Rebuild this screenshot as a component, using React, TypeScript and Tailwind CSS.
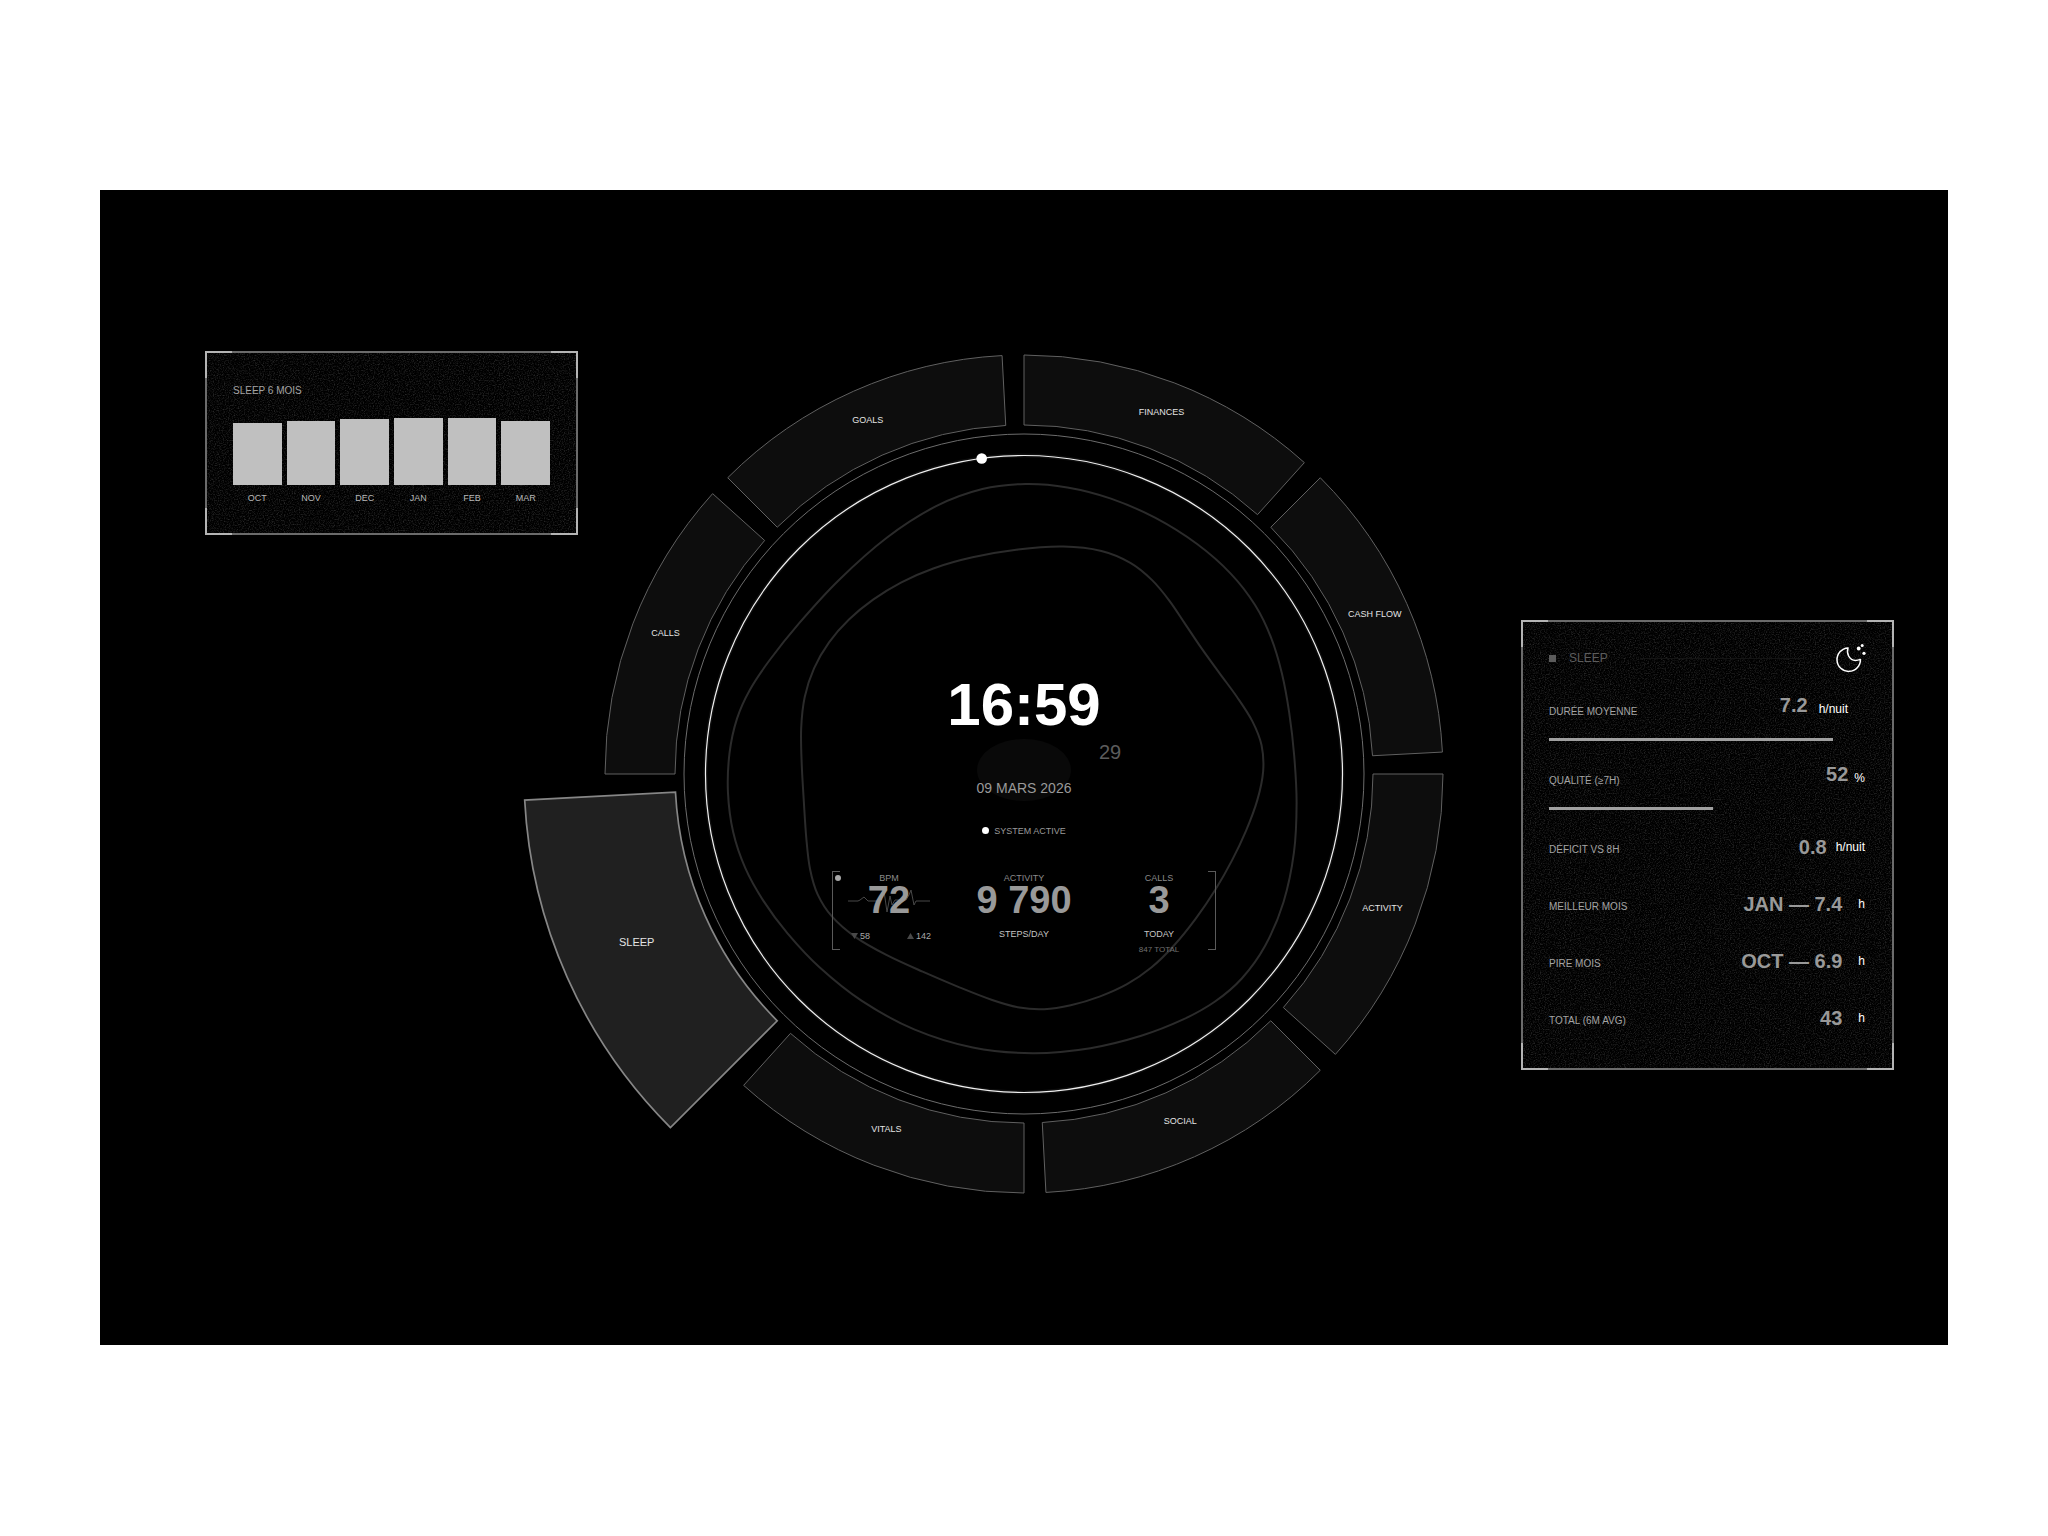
import type { ReactNode } from "react";

type Point = [number, number];

const CENTER = 419;
const OUTER = 419;
const INNER = 349;
const ACTIVE_OUTER = 500;

const segments = [
  { label: "FINANCES", active: false },
  { label: "CASH FLOW", active: false },
  { label: "ACTIVITY", active: false },
  { label: "SOCIAL", active: false },
  { label: "VITALS", active: false },
  { label: "SLEEP", active: true },
  { label: "CALLS", active: false },
  { label: "GOALS", active: false },
];

const months = [
  { name: "OCT", hours: 6.9, height: 62 },
  { name: "NOV", hours: 7.1, height: 64 },
  { name: "DEC", hours: 7.3, height: 66 },
  { name: "JAN", hours: 7.4, height: 67 },
  { name: "FEB", hours: 7.4, height: 67 },
  { name: "MAR", hours: 7.1, height: 64 },
];

const outerBlob: Point[] = [
  [1025, 484], [1067, 487], [1110, 497], [1153, 515], [1200, 544], [1233, 575], [1254, 603],
  [1271, 637], [1282, 673], [1289, 710], [1293, 757], [1296, 800], [1295, 850], [1286, 900],
  [1264, 950], [1240, 978], [1213, 1000], [1187, 1015], [1140, 1036], [1093, 1047], [1030, 1052],
  [975, 1048], [914, 1031], [860, 999], [817, 964], [790, 933], [763, 898], [746, 868], [733, 833],
  [727, 795], [730, 747], [738, 715], [750, 690], [770, 660], [797, 627], [837, 580], [887, 533],
  [940, 502], [982, 489],
];

const innerBlob: Point[] = [
  [1070, 544], [1100, 549], [1130, 562], [1153, 580], [1170, 600], [1183, 621], [1200, 647],
  [1220, 674], [1237, 695], [1253, 722], [1262, 745], [1264, 767], [1258, 800], [1245, 831],
  [1230, 861], [1217, 886], [1197, 917], [1173, 946], [1147, 969], [1133, 980], [1100, 996],
  [1067, 1005], [1043, 1008], [1020, 1006], [995, 1001], [960, 986], [922, 969], [887, 954],
  [853, 936], [832, 917], [817, 891], [810, 867], [807, 843], [805, 800], [802, 760], [801, 727],
  [804, 697], [813, 668], [830, 640], [850, 618], [870, 601], [905, 580], [933, 567], [967, 558],
  [1017, 549],
];

function polar(radius: number, degrees: number): Point {
  const a = (degrees * Math.PI) / 180;
  return [CENTER + radius * Math.sin(a), CENTER - radius * Math.cos(a)];
}

function segmentPath(start: number, active: boolean) {
  const outer = active ? ACTIVE_OUTER : OUTER;
  const end = start + 42;
  const a = polar(outer, start);
  const b = polar(outer, end);
  const c = polar(INNER, end);
  const d = polar(INNER, start);
  return `M${a} A${outer} ${outer} 0 0 1 ${b} L${c} A${INNER} ${INNER} 0 0 0 ${d} Z`;
}

// One relaxation step on a closed contour; a negative weight restores lost volume.
function relax(p: Point[], weight: number): Point[] {
  const n = p.length;
  return p.map(([x, y], i): Point => {
    const [ax, ay] = p[(i + n - 1) % n];
    const [bx, by] = p[(i + 1) % n];
    return [x + weight * ((ax + bx) / 2 - x), y + weight * ((ay + by) / 2 - y)];
  });
}

function smoothPath(source: Point[]) {
  let p = source.map(([x, y]): Point => [x - 605, y - 354]);
  for (let i = 0; i < 6; i++) p = relax(relax(p, 0.5), -0.5);
  const n = p.length;
  let d = `M${p[0]}`;
  for (let i = 0; i < n; i++) {
    const p0 = p[(i + n - 1) % n];
    const p1 = p[i];
    const p2 = p[(i + 1) % n];
    const p3 = p[(i + 2) % n];
    d += ` C${p1[0] + (p2[0] - p0[0]) / 6},${p1[1] + (p2[1] - p0[1]) / 6}`;
    d += ` ${p2[0] - (p3[0] - p1[0]) / 6},${p2[1] - (p3[1] - p1[1]) / 6} ${p2}`;
  }
  return d + "Z";
}

function Panel({ label, children }: { label: string; children: ReactNode }) {
  return (
    <section aria-label={label} className="relative w-full max-w-[373px] border-2 border-[#6b6b6b] bg-black px-[26px] py-[26px]">
      <svg className="absolute inset-0 h-full w-full" aria-hidden="true">
        <filter id={`grain-${label.length}`} colorInterpolationFilters="sRGB">
          <feTurbulence type="fractalNoise" baseFrequency="0.8" numOctaves="2" />
          <feColorMatrix values="0.4 0 0 0 -0.18  0.4 0 0 0 -0.18  0.4 0 0 0 -0.18  0 0 0 0 1" />
        </filter>
        <rect width="100%" height="100%" filter={`url(#grain-${label.length})`} />
      </svg>
      <span className="absolute -left-0.5 -top-0.5 size-[27px] border-l-2 border-t-2 border-[#b4b4b4]" />
      <span className="absolute -right-0.5 -top-0.5 size-[27px] border-r-2 border-t-2 border-[#b4b4b4]" />
      <span className="absolute -bottom-0.5 -left-0.5 size-[27px] border-b-2 border-l-2 border-[#b4b4b4]" />
      <span className="absolute -bottom-0.5 -right-0.5 size-[27px] border-b-2 border-r-2 border-[#b4b4b4]" />
      <div className="relative">{children}</div>
    </section>
  );
}

function SleepChart() {
  return (
    <Panel label="Sleep chart">
      <h2 className="text-[10px] leading-6 text-[#a4a4a4]">SLEEP 6 MOIS</h2>
      <ul className="mt-[15px] flex items-end gap-[5px]">
        {months.map((m) => (
          <li key={m.name} className="flex-1 text-center" title={`${m.hours} h`}>
            <div className="bg-[#c0c0c0]" style={{ height: m.height }} />
            <p className="mb-0.5 mt-1.5 text-[9px] leading-[14px] text-[#b8b8b8]">{m.name}</p>
          </li>
        ))}
      </ul>
    </Panel>
  );
}

function MoonIcon() {
  return (
    <svg viewBox="0 0 30 30" className="size-[30px]" fill="none" stroke="#fff" strokeWidth="1.5" strokeLinejoin="round" aria-hidden="true">
      <path d="M12 5A11.7 11.7 0 1 0 24.4 16.4C19 18.6 14.8 17 12.6 13C11.2 10.4 11.2 7.6 12 5Z" />
      <g fill="#fff" stroke="none">
        <circle cx="22.7" cy="5.5" r="1.9" />
        <circle cx="26.2" cy="2.6" r="1.5" />
        <circle cx="28" cy="10.3" r="1.6" />
      </g>
    </svg>
  );
}

function Value({ value, unit, gap, low = false }: { value: string; unit: string; gap: string; low?: boolean }) {
  return (
    <span className={`flex items-center ${gap}`}>
      <span className="text-[20px] font-bold leading-6 text-[#999]">{value}</span>
      <span className={`text-xs text-white ${low ? "pt-2" : ""}`}>{unit}</span>
    </span>
  );
}

function Meter({ label, value, unit, percent, gap }: { label: string; value: string; unit: string; percent: number; gap: string }) {
  return (
    <li className="mb-[27px]">
      <div className="flex h-6 items-center justify-between">
        <span className="pt-0.5 text-[10px] text-[#a4a4a4]">{label}</span>
        <span className="pb-3">
          <Value value={value} unit={unit} gap={gap} low />
        </span>
      </div>
      <div role="meter" aria-label={label} aria-valuenow={percent} className="mt-[15px] h-[3px]">
        <div className="h-full bg-[#a0a0a0]" style={{ width: `${percent}%` }} />
      </div>
    </li>
  );
}

function Row({ label, value, unit, gap }: { label: string; value: string; unit: string; gap: string }) {
  return (
    <li className="flex h-[57px] items-start justify-between last:h-[34px]">
      <span className="text-[10px] leading-[26px] text-[#a4a4a4]">{label}</span>
      <span className="-mt-0.5">
        <Value value={value} unit={unit} gap={gap} />
      </span>
    </li>
  );
}

function SleepDetails() {
  return (
    <Panel label="Sleep details">
      <header className="-mt-1 flex h-[29px] items-center">
        <span className="size-[7px] bg-[#5c5c5c]" />
        <h2 className="ml-[13px] text-xs text-[#5c5c5c]">SLEEP</h2>
        <span className="mx-8 h-px flex-1 bg-[#141414]" />
        <MoonIcon />
      </header>
      <ul className="mr-px mt-[26px]">
        <Meter label="DURÉE MOYENNE" value="7.2" unit="h/nuit" percent={90} gap="gap-[11px] pr-[17px]" />
        <Meter label="QUALITÉ (≥7H)" value="52" unit="%" percent={52} gap="gap-1.5" />
        <Row label="DÉFICIT VS 8H" value="0.8" unit="h/nuit" gap="gap-[9px]" />
        <Row label="MEILLEUR MOIS" value="JAN — 7.4" unit="h" gap="gap-4" />
        <Row label="PIRE MOIS" value="OCT — 6.9" unit="h" gap="gap-4" />
        <Row label="TOTAL (6M AVG)" value="43" unit="h" gap="gap-4" />
      </ul>
    </Panel>
  );
}

function Stats() {
  return (
    <div className="relative mt-8 grid w-[405px] grid-cols-3 text-center text-[9px] leading-[10px]">
      <span className="absolute left-[10px] top-0 h-[79px] w-2 border-y border-l border-[#5a5a5a]" />
      <span className="absolute right-[11px] top-0 h-[79px] w-2 border-y border-r border-[#5a5a5a]" />
      <span className="absolute left-[13px] top-1 size-1.5 rounded-full bg-[#a8a8a8]" />
      <div className="relative pt-0.5">
        <p className="text-[#8a8a8a]">BPM</p>
        <svg viewBox="0 0 82 28" className="absolute left-[26px] top-[16px] h-7 w-[82px]" fill="none" stroke="#484848" aria-hidden="true">
          <path d="M0 14H10L12 13L16 10L20 14H30L33 13L36 4L39 25L42 9L44 18L47 13H58L61 8L63 3L66 18L68 14H82" />
        </svg>
        <p className="relative mt-0.5 text-[38px] font-bold leading-[30px] text-[#999]">72</p>
        <div className="mt-4 flex justify-center gap-[37px] pl-1 text-[#a8a8a8]">
          <span className="flex items-center gap-0.5">
            <svg viewBox="0 0 7 6" className="h-1.5 w-[7px]" fill="#484848" aria-hidden="true">
              <path d="M0 0H7L3.500 6Z" />
            </svg>
            58
          </span>
          <span className="flex items-center gap-0.5">
            <svg viewBox="0 0 7 6" className="h-1.5 w-[7px]" fill="#484848" aria-hidden="true">
              <path d="M0 6H7L3.500 0Z" />
            </svg>
            142
          </span>
        </div>
      </div>
      <div className="pt-0.5">
        <p className="text-[#8a8a8a]">ACTIVITY</p>
        <p className="mt-0.5 text-[38px] font-bold leading-[30px] text-[#999]">9 790</p>
        <p className="mt-3.5 text-[#c4c4c4]">STEPS/DAY</p>
      </div>
      <div className="pt-0.5">
        <p className="text-[#8a8a8a]">CALLS</p>
        <p className="mt-0.5 text-[38px] font-bold leading-[30px] text-[#999]">3</p>
        <p className="mt-3.5 text-[#c4c4c4]">TODAY</p>
        <p className="mt-1.5 text-[8px] text-[#707070]">847 TOTAL</p>
      </div>
    </div>
  );
}

function Dial() {
  return (
    <nav aria-label="Life areas" className="relative aspect-square w-full">
      <svg viewBox="0 0 838 838" className="absolute inset-0 h-full w-full overflow-visible" fill="none" aria-hidden="true">
        {segments.map((s, i) => (
          <path
            key={s.label}
            d={segmentPath(i * 45, s.active)}
            fill={s.active ? "#202020" : "#0d0d0d"}
            stroke={s.active ? "#868686" : "#606060"}
            strokeWidth={s.active ? 1.7 : 1}
          />
        ))}
        <circle cx={CENTER} cy={CENTER} r="340" stroke="#6c6c6c" />
        <circle cx={CENTER} cy={CENTER} r="318.500" stroke="#fff" strokeOpacity="0.06" strokeWidth="4" />
        <circle cx={CENTER} cy={CENTER} r="318.500" stroke="#f0f0f0" strokeWidth="1.200" />
        <path d={smoothPath(outerBlob)} stroke="#2b2b2b" strokeWidth="2" />
        <path d={smoothPath(innerBlob)} stroke="#2b2b2b" strokeWidth="2" />
        <ellipse cx={CENTER} cy="415" rx="47" ry="31" fill="#090909" />
        <circle cx="376.700" cy="103.500" r="5.300" fill="#fff" />
      </svg>
      <div className="absolute inset-0 flex flex-col items-center pt-[319px]">
        <time className="text-[60px] font-bold leading-[62px] text-white">16:59</time>
        <p className="mb-[10px] flex h-8 items-center pl-[172px] text-xl text-[#5c5c5c]">29</p>
        <p className="text-sm leading-5 text-[#999]">09 MARS 2026</p>
        <p className="mt-[25px] flex items-center gap-[5px] text-[9px] leading-4 text-[#999]">
          <span className="size-[7px] rounded-full bg-white" />
          SYSTEM ACTIVE
        </p>
        <Stats />
      </div>
      {segments.map((s, i) => {
        const [x, y] = polar(s.active ? 424 : 384, i * 45 + 21);
        return (
          <button
            key={s.label}
            type="button"
            aria-pressed={s.active}
            className={`absolute -translate-x-1/2 -translate-y-1/2 whitespace-nowrap text-[#e4e4e4] ${s.active ? "pb-2 text-[11px]" : "pb-1 text-[9px]"}`}
            style={{ left: `${(x / 838) * 100}%`, top: `${(y / 838) * 100}%` }}
          >
            {s.label}
          </button>
        );
      })}
    </nav>
  );
}

export default function App() {
  return (
    <div className="flex min-h-screen items-center bg-white px-[100px] pb-0.5 font-['Liberation_Sans',Arial,sans-serif]">
      <main className="grid min-h-[1155px] w-full grid-cols-[1fr_minmax(0,838px)_1fr] items-start bg-black">
        <div className="pl-[105px] pt-[161px]">
          <SleepChart />
        </div>
        <div className="pt-[165px]">
          <Dial />
        </div>
        <div className="flex justify-end pl-6 pr-[54px] pt-[430px]">
          <SleepDetails />
        </div>
      </main>
    </div>
  );
}
